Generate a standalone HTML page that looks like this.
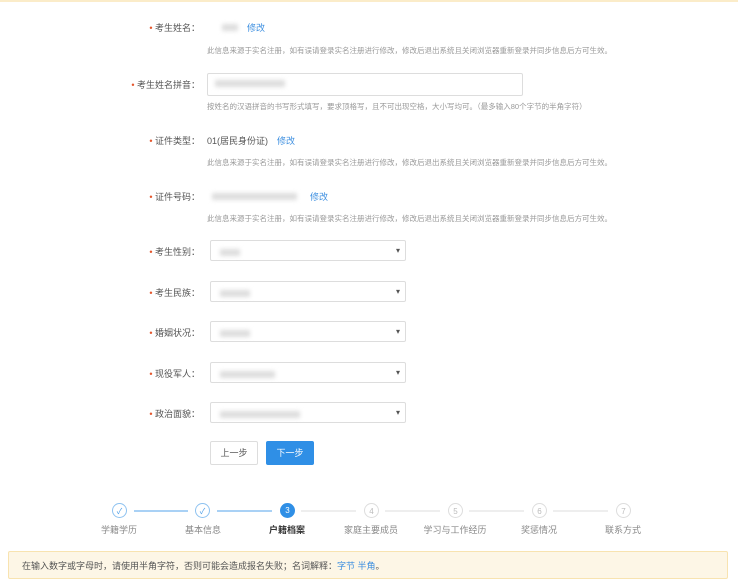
<!DOCTYPE html>
<html><head><meta charset="utf-8"><style>
body{margin:0;width:738px;height:587px;background:#fff;font-family:"Liberation Sans","Noto Sans CJK SC",sans-serif;position:relative;overflow:hidden;color:#333}
.a{position:absolute;white-space:nowrap}
.lbl{font-size:9px;color:#555;text-align:right;width:200px;left:0}
.lbl:before{content:"• ";color:#e4572e}
.hint{font-size:7.5px;color:#999;left:207px}
.lk{color:#3d8fe0}
.blur{position:absolute;background:#ddd;filter:blur(2px);height:7px}
.sel{position:absolute;left:210px;width:194px;height:19px;border:1px solid #ddd;border-radius:2px}
.sel:after{content:"▾";position:absolute;right:5px;top:5px;font-size:8px;color:#555}
.c{position:absolute;width:15px;height:15px;border-radius:50%;top:503px;font-size:8px;text-align:center;line-height:15px;box-sizing:border-box}
.c.d{border:1px solid #8ec2f0;color:#4a9de8}
.c.f{border:1px solid #ddd;color:#bbb}
.c.cur{background:#2f8fe6;color:#fff}
.ln{position:absolute;top:510px;height:2px}
.sl{position:absolute;top:523px;font-size:9px;color:#888;width:84px;text-align:center}
</style></head><body>
<div class="a" style="left:0;top:0;width:738px;height:2px;background:#fbecc9"></div>

<div class="a lbl" style="top:21px">考生姓名：</div>
<div class="blur" style="left:222px;top:24px;width:16px"></div>
<div class="a lk" style="left:247px;top:21px;font-size:9px">修改</div>
<div class="a hint" style="top:45px">此信息来源于实名注册，如有误请登录实名注册进行修改，修改后退出系统且关闭浏览器重新登录并同步信息后方可生效。</div>

<div class="a lbl" style="top:78px">考生姓名拼音：</div>
<div class="a" style="left:207px;top:73px;width:314px;height:21px;border:1px solid #ddd;border-radius:2px"></div>
<div class="blur" style="left:215px;top:80px;width:70px"></div>
<div class="a hint" style="top:101px">按姓名的汉语拼音的书写形式填写，要求顶格写，且不可出现空格，大小写均可。（最多输入80个字节的半角字符）</div>

<div class="a lbl" style="top:134px">证件类型：</div>
<div class="a" style="left:207px;top:134px;font-size:9px;color:#555">01(居民身份证)　<span class="lk">修改</span></div>
<div class="a hint" style="top:157px">此信息来源于实名注册，如有误请登录实名注册进行修改，修改后退出系统且关闭浏览器重新登录并同步信息后方可生效。</div>

<div class="a lbl" style="top:190px">证件号码：</div>
<div class="blur" style="left:212px;top:193px;width:85px"></div>
<div class="a lk" style="left:310px;top:190px;font-size:9px">修改</div>
<div class="a hint" style="top:213px">此信息来源于实名注册，如有误请登录实名注册进行修改，修改后退出系统且关闭浏览器重新登录并同步信息后方可生效。</div>

<div class="a lbl" style="top:245px">考生性别：</div><div class="sel" style="top:240px"></div><div class="blur" style="left:220px;top:249px;width:20px"></div>
<div class="a lbl" style="top:286px">考生民族：</div><div class="sel" style="top:281px"></div><div class="blur" style="left:220px;top:290px;width:30px"></div>
<div class="a lbl" style="top:326px">婚姻状况：</div><div class="sel" style="top:321px"></div><div class="blur" style="left:220px;top:330px;width:30px"></div>
<div class="a lbl" style="top:367px">现役军人：</div><div class="sel" style="top:362px"></div><div class="blur" style="left:220px;top:371px;width:55px"></div>
<div class="a lbl" style="top:407px">政治面貌：</div><div class="sel" style="top:402px"></div><div class="blur" style="left:220px;top:411px;width:80px"></div>

<div class="a" style="left:210px;top:441px;width:46px;height:22px;border:1px solid #ddd;border-radius:2px;font-size:9px;text-align:center;line-height:22px;color:#555">上一步</div>
<div class="a" style="left:266px;top:441px;width:48px;height:24px;background:#2f8fe6;border-radius:2px;font-size:9px;text-align:center;line-height:24px;color:#fff">下一步</div>

<div class="ln" style="left:134px;width:54px;background:#a9d1f5"></div>
<div class="ln" style="left:217px;width:55px;background:#a9d1f5"></div>
<div class="ln" style="left:301px;width:55px;background:#eee"></div>
<div class="ln" style="left:385px;width:55px;background:#eee"></div>
<div class="ln" style="left:469px;width:55px;background:#eee"></div>
<div class="ln" style="left:553px;width:55px;background:#eee"></div>
<div class="c d" style="left:112px">✓</div>
<div class="c d" style="left:195px">✓</div>
<div class="c cur" style="left:280px">3</div>
<div class="c f" style="left:364px">4</div>
<div class="c f" style="left:448px">5</div>
<div class="c f" style="left:532px">6</div>
<div class="c f" style="left:616px">7</div>
<div class="sl" style="left:77px">学籍学历</div>
<div class="sl" style="left:161px">基本信息</div>
<div class="sl" style="left:245px;color:#333;font-weight:bold">户籍档案</div>
<div class="sl" style="left:329px">家庭主要成员</div>
<div class="sl" style="left:413px">学习与工作经历</div>
<div class="sl" style="left:497px">奖惩情况</div>
<div class="sl" style="left:581px">联系方式</div>

<div class="a" style="left:8px;top:551px;width:720px;height:28px;background:#fdf6e6;border:1px solid #f8e3b0;border-radius:2px;font-size:9px;line-height:28px;color:#555;padding-left:13px;box-sizing:border-box">在输入数字或字母时，请使用半角字符，否则可能会造成报名失败；名词解释：<span class="lk">字节 半角</span>。</div>
</body></html>
